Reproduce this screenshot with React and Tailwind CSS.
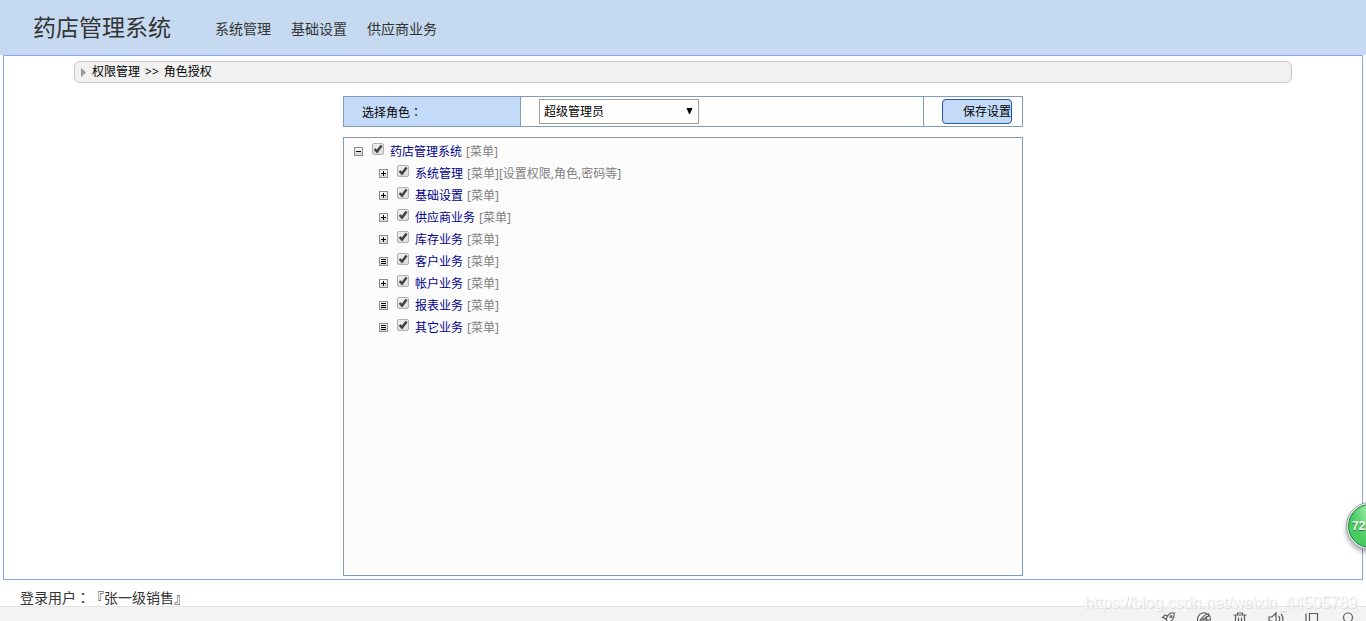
import React, { useState } from "react";

const TREE = [
  { label: "系统管理", note: "[菜单][设置权限,角色,密码等]", kind: "plus" },
  { label: "基础设置", note: "[菜单]", kind: "plus" },
  { label: "供应商业务", note: "[菜单]", kind: "plus" },
  { label: "库存业务", note: "[菜单]", kind: "plus" },
  { label: "客户业务", note: "[菜单]", kind: "leaf" },
  { label: "帐户业务", note: "[菜单]", kind: "plus" },
  { label: "报表业务", note: "[菜单]", kind: "leaf" },
  { label: "其它业务", note: "[菜单]", kind: "leaf" },
];

const GLYPHS = {
  minus: "M2 4h5v1h-5z",
  plus: "M2 4h5v1h-5z M4 2h1v5h-1z",
  leaf: "M2 2h5v1h-5z M2 4h5v1h-5z M2 6h5v1h-5z",
};

function Toggler({ kind, label }) {
  return (
    <button type="button" aria-label={label} className="mt-1.5 size-[9px] shrink-0">
      <svg viewBox="0 0 9 9" className="block size-[9px]" shapeRendering="crispEdges">
        <rect width="9" height="9" fill="#8c8c8c" />
        <rect x="1" y="1" width="7" height="7" fill="#dcdcdc" />
        <rect x="1" y="1" width="7" height="4" fill="#f2f2f2" />
        <path d={GLYPHS[kind]} fill="#000" />
      </svg>
    </button>
  );
}

function TreeRow({ id, kind, label, note }) {
  const [checked, setChecked] = useState(true);
  return (
    <div className="flex h-[22px] items-start">
      <Toggler kind={kind} label={label} />
      <span className="mt-0.5 ml-[9px] grid size-3 shrink-0">
        <input
          id={id}
          type="checkbox"
          checked={checked}
          onChange={() => setChecked(!checked)}
          className="col-start-1 row-start-1 size-3 appearance-none rounded-[2px] border border-[#b0b0b0] bg-linear-to-b from-[#eeeeee] to-[#dcdcdc]"
        />
        {checked && (
          <svg viewBox="0 0 12 12" className="pointer-events-none col-start-1 row-start-1 size-3">
            <path d="M2.600 6 5 8.600 9.600 2.600" fill="none" stroke="#404040" strokeWidth="2.4" />
          </svg>
        )}
      </span>
      <label htmlFor={id} className="ml-1.5 text-xs leading-[22px] whitespace-nowrap text-[#00008b]">
        {label}
      </label>
      <span className="ml-1 text-xs leading-[22px] whitespace-nowrap text-[#808080]">{note}</span>
    </div>
  );
}

function StatusIcon({ label, children }) {
  return (
    <button type="button" aria-label={label} className="size-4 shrink-0">
      <svg viewBox="0 0 16 16" className="block size-4" fill="none" stroke="#5c5c5c" strokeWidth="1.2">
        {children}
      </svg>
    </button>
  );
}

export default function App() {
  return (
    <div className="relative flex h-screen flex-col overflow-hidden bg-white font-['Noto_Sans','Noto_Sans_CJK_SC',sans-serif] text-black [text-spacing-trim:space-all]">
      <header className="flex h-[55px] shrink-0 items-center bg-[#c5daf0] pb-0.5 pl-[33px] text-[#333]">
        <h1 className="text-[23px] leading-[52px]">药店管理系统</h1>
        <nav className="ml-11 flex gap-5 pt-1 text-sm">
          <a href="#system">系统管理</a>
          <a href="#base">基础设置</a>
          <a href="#supplier">供应商业务</a>
        </nav>
      </header>

      <main className="mx-[3px] flex min-h-0 flex-1 flex-col border border-[#8aa8e8] px-[70px] pt-[5px] pb-[3px]">
        <div className="flex h-[22px] shrink-0 items-center rounded-md border border-[#c8c8c8] bg-[#f1f1f1] pl-1.5 text-xs">
          <svg viewBox="0 0 5 9" className="mr-1.5 h-[9px] w-[5px]">
            <path d="M0 0 5 4.5 0 9z" fill="#999" />
          </svg>
          <span>权限管理</span>
          <span className="mx-[5px]">&gt;&gt;</span>
          <span>角色授权</span>
        </div>

        <form
          className="mx-auto mt-[13px] flex h-[31px] w-full max-w-[680px] shrink-0 border border-[#7f9db9] text-xs"
          onSubmit={(e) => e.preventDefault()}
        >
          <label htmlFor="role" className="w-44 bg-[#c3daf9] pl-[18px] leading-[29px]">
            选择角色<span className="font-['Noto_Sans_CJK_TC']">：</span>
          </label>
          <div className="flex flex-1 items-center border-x border-[#7f9db9] pl-[18px]">
            <div className="grid w-40 items-center">
              <select
                id="role"
                className="col-start-1 row-start-1 h-[25px] w-40 appearance-none border border-[#a0a0a0] bg-white pl-1 text-xs"
              >
                <option>超级管理员</option>
              </select>
              <svg viewBox="0 0 7 7" className="pointer-events-none col-start-1 row-start-1 mr-1.5 size-[7px] justify-self-end">
                <path d="M0.500 0h6L4 6H3z" fill="#000" />
              </svg>
            </div>
          </div>
          <div className="flex w-[98px] items-center pl-[18px]">
            <button
              type="submit"
              className="h-[25px] w-[70px] overflow-hidden rounded border border-[#2856a8] bg-[#c3daf9] pl-5 text-left text-xs whitespace-nowrap"
            >
              保存设置
            </button>
          </div>
        </form>

        <section className="mx-auto mt-2.5 min-h-0 w-full max-w-[680px] flex-1 border border-[#7f9db9] bg-[#fcfcfc] pt-[3px] pl-2.5">
          <TreeRow id="root-node" kind="minus" label="药店管理系统" note="[菜单]" />
          <div className="pl-[25px]">
            {TREE.map((n, i) => (
              <TreeRow key={n.label} id={`node-${i}`} {...n} />
            ))}
          </div>
        </section>
      </main>

      <p className="h-[26px] shrink-0 pt-1 pl-5 text-sm leading-[26px] text-[#333]">
        登录用户<span className="font-['Noto_Sans_CJK_TC']">：</span>『张一级销售』
      </p>

      <footer className="flex h-[15px] shrink-0 items-start justify-end gap-5 overflow-hidden border-t border-[#e4e4e4] bg-[#f3f3f3] pt-1 pr-2.5">
        <StatusIcon label="加速">
          <path d="M14.500 2H11C8.500 3 7 5 6 8.500L8.500 11.500C12 10.500 14 7.500 14.500 2zM7.500 5 5 4 2.500 6.500 6 8M11.500 9.500 11 13.500 8.500 11.500M5.500 10.500 2.500 14" />
          <circle cx="11" cy="5.5" r="1" />
        </StatusIcon>
        <StatusIcon label="浏览模式">
          <path d="M14.500 8.500A6.500 6.500 0 1 0 12 13.500M3 13.500C3 9.500 7 4 13 2.500M14 4 6 9h9M10.500 5v7" />
        </StatusIcon>
        <StatusIcon label="清理">
          <path d="M1.500 4h13M5.500 4V2h5v2M3.500 4v11h9V4M6.500 6.500v6M9.500 6.500v6" />
        </StatusIcon>
        <StatusIcon label="声音">
          <path d="M1 6h3l4-4v12l-4-4H1zM10.500 5c1.500 1.500 1.500 4 0 6M13 3c2.500 2.500 2.500 7 0 10" />
        </StatusIcon>
        <StatusIcon label="窗口">
          <path d="M5.500 2.500h8v11h-8zM2 2.500v11" />
        </StatusIcon>
        <StatusIcon label="缩放">
          <circle cx="8" cy="6.5" r="4.500" />
          <path d="M11 10.500 15 15" />
        </StatusIcon>
      </footer>

      <span className="pointer-events-none absolute right-[9px] bottom-2 font-['Liberation_Sans',sans-serif] text-base leading-5 text-[#fafafa] text-shadow-[1px_1px_1px_#d8d8d8]">
        https://blog.csdn.net/weixin_44505789
      </span>

      <button
        type="button"
        className="absolute -right-7 bottom-[71px] flex size-12 items-center rounded-full border border-[#a0a0a0] bg-[#efefef] p-px shadow-[0_3px_5px_#00000055]"
      >
        <span className="flex size-full items-center rounded-full border border-[#17803f] bg-radial-[at_50%_10%] from-[#a8eeb0] to-[#48cc62] to-60% pl-[3px] font-['Liberation_Sans',sans-serif] text-xs font-bold text-white text-shadow-[0_1px_1px_#2c7038]">
          72
        </span>
      </button>
    </div>
  );
}
